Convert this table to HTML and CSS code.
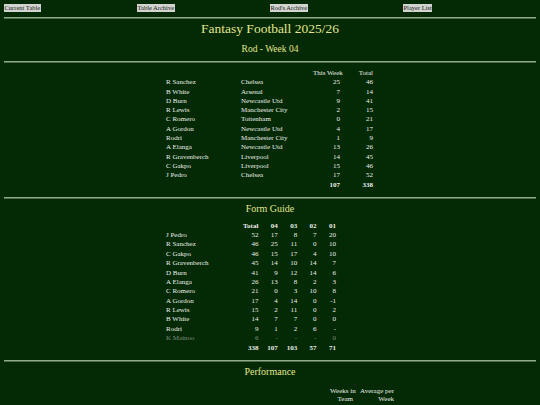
FILE: index.html
```html
<!DOCTYPE html>
<html>
<head>
<meta charset="utf-8">
<link rel="stylesheet" href="styles.css">
</head>
<body>
<nav class="nav">
  <div><a href="#">Current Table</a></div>
  <div><a href="#">Table Archive</a></div>
  <div><a href="#">Rod's Archive</a></div>
  <div><a href="#">Player List</a></div>
</nav>
<div class="rule r1"></div>
<h1 class="title">Fantasy Football 2025/26</h1>
<h2 class="subtitle">Rod - Week 04</h2>
<div class="rule r2"></div>
<div class="wrap">
  <table class="tbl team">
    <colgroup><col class="c-name"><col class="c-club"><col class="c-week"><col class="c-total"></colgroup>
    <thead><tr><th></th><th></th><th class="num">This Week</th><th class="num">Total</th></tr></thead>
    <tbody>
      <tr><td>R Sanchez</td><td>Chelsea</td><td class="num">25</td><td class="num">46</td></tr>
      <tr><td>B White</td><td>Arsenal</td><td class="num">7</td><td class="num">14</td></tr>
      <tr><td>D Burn</td><td>Newcastle Utd</td><td class="num">9</td><td class="num">41</td></tr>
      <tr><td>R Lewis</td><td>Manchester City</td><td class="num">2</td><td class="num">15</td></tr>
      <tr><td>C Romero</td><td>Tottenham</td><td class="num">0</td><td class="num">21</td></tr>
      <tr><td>A Gordon</td><td>Newcastle Utd</td><td class="num">4</td><td class="num">17</td></tr>
      <tr><td>Rodri</td><td>Manchester City</td><td class="num">1</td><td class="num">9</td></tr>
      <tr><td>A Elanga</td><td>Newcastle Utd</td><td class="num">13</td><td class="num">26</td></tr>
      <tr><td>R Gravenberch</td><td>Liverpool</td><td class="num">14</td><td class="num">45</td></tr>
      <tr><td>C Gakpo</td><td>Liverpool</td><td class="num">15</td><td class="num">46</td></tr>
      <tr><td>J Pedro</td><td>Chelsea</td><td class="num">17</td><td class="num">52</td></tr>
      <tr class="sum"><td></td><td></td><td class="num">107</td><td class="num">338</td></tr>
    </tbody>
  </table>
</div>
<div class="rule r3"></div>
<h3 class="section">Form Guide</h3>
<div class="wrap">
  <table class="tbl form">
    <colgroup><col class="c-name"><col class="c-f"><col class="c-f"><col class="c-f"><col class="c-f"><col class="c-f"></colgroup>
    <thead><tr><th></th><th class="num">Total</th><th class="num">04</th><th class="num">03</th><th class="num">02</th><th class="num">01</th></tr></thead>
    <tbody>
      <tr><td>J Pedro</td><td class="num b">52</td><td class="num">17</td><td class="num">8</td><td class="num">7</td><td class="num">20</td></tr>
      <tr><td>R Sanchez</td><td class="num b">46</td><td class="num">25</td><td class="num">11</td><td class="num">0</td><td class="num">10</td></tr>
      <tr><td>C Gakpo</td><td class="num b">46</td><td class="num">15</td><td class="num">17</td><td class="num">4</td><td class="num">10</td></tr>
      <tr><td>R Gravenberch</td><td class="num b">45</td><td class="num">14</td><td class="num">10</td><td class="num">14</td><td class="num">7</td></tr>
      <tr><td>D Burn</td><td class="num b">41</td><td class="num">9</td><td class="num">12</td><td class="num">14</td><td class="num">6</td></tr>
      <tr><td>A Elanga</td><td class="num b">26</td><td class="num">13</td><td class="num">8</td><td class="num">2</td><td class="num">3</td></tr>
      <tr><td>C Romero</td><td class="num b">21</td><td class="num">0</td><td class="num">3</td><td class="num">10</td><td class="num">8</td></tr>
      <tr><td>A Gordon</td><td class="num b">17</td><td class="num">4</td><td class="num">14</td><td class="num">0</td><td class="num">-1</td></tr>
      <tr><td>R Lewis</td><td class="num b">15</td><td class="num">2</td><td class="num">11</td><td class="num">0</td><td class="num">2</td></tr>
      <tr><td>B White</td><td class="num b">14</td><td class="num">7</td><td class="num">7</td><td class="num">0</td><td class="num">0</td></tr>
      <tr><td>Rodri</td><td class="num b">9</td><td class="num">1</td><td class="num">2</td><td class="num">6</td><td class="num">-</td></tr>
      <tr class="gone"><td>K Mainoo</td><td class="num">6</td><td class="num">-</td><td class="num">-</td><td class="num">-</td><td class="num">0</td></tr>
      <tr class="sum"><td></td><td class="num">338</td><td class="num">107</td><td class="num">103</td><td class="num">57</td><td class="num">71</td></tr>
    </tbody>
  </table>
</div>
<div class="rule r4"></div>
<h3 class="section">Performance</h3>
<div class="wrap">
  <table class="tbl perf">
    <colgroup><col class="c-name"><col class="c-pclub"><col class="c-weeks"><col class="c-avg"></colgroup>
    <thead><tr><th></th><th></th><th class="num">Weeks in<br>Team</th><th class="num">Average per<br>Week</th></tr></thead>
  </table>
</div>
</body>
</html>
```
FILE: styles.css
```css
html, body {
  background: #032a05;
}
body {
  margin: 4px;
  font-family: "Liberation Serif", "Times New Roman", serif;
  color: #eceee8;
}
.nav {
  display: grid;
  grid-template-columns: repeat(4, 1fr);
  height: 9px;
  font-size: 6.5px;
  line-height: 8px;
}
.nav a {
  display: inline-block;
  background: #d2d4d0;
  color: #1a1a1a;
  text-decoration: none;
  padding: 0 0.5px;
}
.rule {
  height: 0;
  border-top: 1px solid #8fab8c;
  border-bottom: 1px solid #4e6e4c;
}
.r1 { margin-top: 4px; }
.r2 { margin-top: 6px; }
.r3 { margin-top: 7px; }
.r4 { margin-top: 7px; }
.title {
  margin: 2px 0 0;
  font-size: 13.5px;
  line-height: 16px;
  font-weight: normal;
  text-align: center;
  color: #e3e58e;
}
.subtitle {
  margin: 6px 0 0;
  font-size: 9.5px;
  line-height: 12px;
  font-weight: normal;
  text-align: center;
  color: #e3e58e;
}
.section {
  margin: 4.5px 0 0;
  font-size: 10px;
  line-height: 12px;
  font-weight: normal;
  text-align: center;
  color: #e3e58e;
}
.wrap {
  width: 210px;
  margin: 0 auto;
}
.tbl {
  border-collapse: collapse;
  table-layout: fixed;
  font-size: 7px;
}
.tbl td, .tbl th {
  padding: 0 1px;
  white-space: nowrap;
  text-align: left;
  font-weight: normal;
}
.form th { font-weight: bold; }
.tbl .num { text-align: right; }
.team { margin-top: 6px; width: 209px; }
.team td, .team th { height: 9.3px; line-height: 9.3px; }
.form { margin-top: 6.3px; width: 172px; }
.form td, .form th { height: 9.38px; line-height: 9.38px; }
.perf { margin-top: 9px; width: 230px; }
.perf th { line-height: 8px; vertical-align: bottom; }
.c-name { width: 75px; }
.c-club { width: 72px; }
.c-week { width: 29px; }
.c-total { width: 33px; }
.c-f { width: 19.4px; }
.c-pclub { width: 89px; }
.c-weeks { width: 25px; }
.c-avg { width: 41px; }
.b { font-weight: bold; }
.sum td { font-weight: bold; }
.gone td { color: #7f8a7d; }
```
